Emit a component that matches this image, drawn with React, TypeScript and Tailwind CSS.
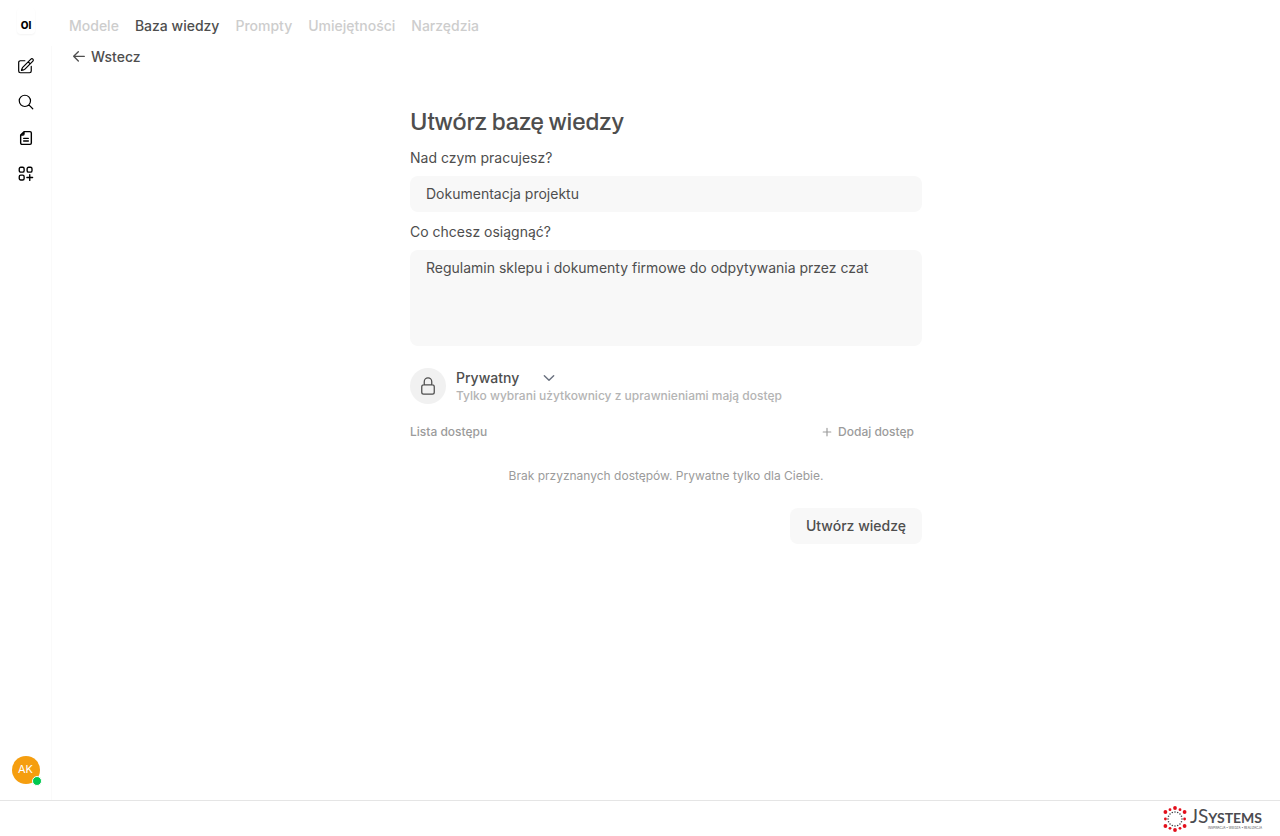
import type { ReactNode } from "react";

type IconProps = {
  className?: string;
  strokeWidth?: number;
  children: ReactNode;
};

function Icon({ className, strokeWidth = 1.5, children }: IconProps) {
  return (
    <svg
      aria-hidden="true"
      viewBox="0 0 24 24"
      fill="none"
      stroke="currentColor"
      strokeWidth={strokeWidth}
      strokeLinecap="round"
      strokeLinejoin="round"
      className={className}
    >
      {children}
    </svg>
  );
}

const sidebarItems = [
  {
    label: "Nowy czat",
    size: "size-[18px]",
    strokeWidth: 1.6,
    icon: (
      <path d="M16.862 4.487l1.687-1.688a1.875 1.875 0 112.652 2.652L10.582 16.07a4.5 4.5 0 01-1.897 1.13L6 18l.8-2.685a4.5 4.5 0 011.13-1.897l8.932-8.931zM15 6.500l2.500 2.500M19 12.500v6.250A2.250 2.250 0 0116.750 21H4.500A2.250 2.250 0 012.250 18.750V7.250A2.250 2.250 0 014.500 5H10.500" />
    ),
  },
  {
    label: "Szukaj",
    size: "size-[18px]",
    strokeWidth: 1.6,
    icon: <path d="M21 21l-5.197-5.197m0 0A7.5 7.5 0 105.196 5.196a7.5 7.5 0 0010.607 10.607z" />,
  },
  {
    label: "Notatki",
    size: "size-4",
    strokeWidth: 2.1,
    icon: (
      <path d="M9 2.500h9a2 2 0 0 1 2 2v15a2 2 0 0 1-2 2H6a2 2 0 0 1-2-2V7.500L9 2.500v3.500a1.500 1.500 0 0 1-1.500 1.500H4M8.500 12.500h7M8.500 16.500h7" />
    ),
  },
  {
    label: "Obszar roboczy",
    size: "size-[18px]",
    strokeWidth: 1.8,
    icon: (
      <>
        <rect x="3" y="3" width="6.500" height="6.500" rx="2" />
        <rect x="13.500" y="3" width="6.500" height="6.500" rx="2" />
        <rect x="3" y="13.500" width="6.500" height="6.500" rx="2" />
        <path d="M17 13v7.500M13.200 16.700h7.600" />
      </>
    ),
  },
];

const tabs = ["Modele", "Baza wiedzy", "Prompty", "Umiejętności", "Narzędzia"];

// Footer logo: red dots on a hexagon outline, dark dots on a ring inside it
const outerDots = [
  [0, -11, 1.9],
  [5, -9.3, 1.4],
  [9.6, -7, 1.9],
  [9.6, 0, 1.4],
  [9.6, 7, 1.9],
  [5, 9.3, 1.4],
  [0, 11, 1.9],
  [-5, 9.3, 1.4],
  [-9.6, 7, 1.9],
  [-9.6, 0, 1.4],
  [-9.6, -7, 1.9],
  [-5, -9.3, 1.4],
];
const innerDots = Array.from({ length: 16 }, (_, i) => (i * Math.PI) / 8);

function Sidebar() {
  return (
    <aside className="flex w-13 shrink-0 flex-col items-center text-black">
      <a
        href="#"
        className="mt-2 flex h-[26px] w-[18px] items-center justify-center rounded-sm pt-2 text-[10px] font-extrabold shadow-xs"
      >
        OI
      </a>
      <div className="mt-3 flex w-full flex-1 flex-col items-center border-r border-[#fafafa] pt-0.5">
        <nav className="flex flex-col">
          {sidebarItems.map((item) => (
            <button
              key={item.label}
              type="button"
              aria-label={item.label}
              className="flex size-9 items-center justify-center"
            >
              <Icon strokeWidth={item.strokeWidth} className={item.size}>
                {item.icon}
              </Icon>
            </button>
          ))}
        </nav>
        <button type="button" className="relative mt-auto mb-4 size-7 rounded-full bg-[#f59e0f] text-[11px] text-white">
          AK
          <span className="absolute -right-0.5 -bottom-0.5 size-2.5 rounded-full border border-white bg-[#00c950]" />
        </button>
      </div>
    </aside>
  );
}

function Logo() {
  return (
    <a href="#" aria-label="JSystems" className="flex items-center gap-0.5">
      <svg aria-hidden="true" viewBox="0 0 26 26" className="size-[26px]">
        {outerDots.map(([x, y, r]) => (
          <circle key={`${x},${y}`} cx={13 + x} cy={13 + y} r={r} fill="#e30f1b" />
        ))}
        {innerDots.map((a) => (
          <circle key={a} cx={13 + 7 * Math.sin(a)} cy={13 - 7 * Math.cos(a)} r="0.8" fill="#45454a" />
        ))}
      </svg>
      <span className="flex flex-col items-end text-[#4b4b50]">
        <span className="text-[19px] leading-4 font-[Lato,sans-serif]">
          JS<span className="text-[14px] font-bold">YSTEMS</span>
        </span>
        <span className="text-[3px] leading-1">INSPIRACJA • WIEDZA • REALIZACJA</span>
      </span>
    </a>
  );
}

function KnowledgeForm() {
  return (
    <form className="mx-auto mt-[39px] w-full max-w-lg" onSubmit={(e) => e.preventDefault()}>
      <h1 className="text-2xl font-medium font-[Archivo,'Liberation_Sans',sans-serif]">Utwórz bazę wiedzy</h1>

      <label htmlFor="name" className="mt-2.5 mb-2 block">
        Nad czym pracujesz?
      </label>
      <input
        id="name"
        type="text"
        defaultValue="Dokumentacja projektu"
        className="block w-full rounded-lg bg-[#f8f8f8] px-4 py-2 outline-none"
      />

      <label htmlFor="description" className="mt-2.5 mb-2 block">
        Co chcesz osiągnąć?
      </label>
      <textarea
        id="description"
        rows={4}
        defaultValue="Regulamin sklepu i dokumenty firmowe do odpytywania przez czat"
        className="block w-full resize-none rounded-lg bg-[#f8f8f8] px-4 py-2 outline-none"
      />

      <div className="mt-[22px] flex items-center gap-2.5">
        <div className="flex size-9 items-center justify-center rounded-full bg-[#f1f1f1]">
          <Icon className="size-5">
            <path d="M16.500 10.500V6.750a4.500 4.500 0 1 0-9 0v3.750m-.750 11.250h10.500a2.250 2.250 0 0 0 2.250-2.250v-6.750a2.250 2.250 0 0 0-2.250-2.250H6.750a2.250 2.250 0 0 0-2.250 2.250v6.750a2.250 2.250 0 0 0 2.250 2.250Z" />
          </Icon>
        </div>
        <div>
          <div className="relative flex w-26 items-center">
            <select aria-label="Widoczność" className="w-full appearance-none bg-transparent font-medium outline-none">
              <option>Prywatny</option>
              <option>Publiczny</option>
            </select>
            <Icon strokeWidth={2.5} className="pointer-events-none absolute right-1 size-3.5 text-[#6b7280]">
              <path d="M4 8l8 8 8-8" />
            </Icon>
          </div>
          <p className="text-xs font-medium text-[#b4b4b4]">
            Tylko wybrani użytkownicy z uprawnieniami mają dostęp
          </p>
        </div>
      </div>

      <div className="mt-4 flex items-center justify-between pr-2 text-xs font-medium text-[#9b9b9b]">
        <span>Lista dostępu</span>
        <button type="button" className="flex items-center gap-1 py-1">
          <Icon strokeWidth={2} className="size-3.5">
            <path d="M12 5.500v13M5.500 12h13" />
          </Icon>
          Dodaj dostęp
        </button>
      </div>

      <p className="mt-6 text-center text-xs text-[#9b9b9b]">
        Brak przyznanych dostępów. Prywatne tylko dla Ciebie.
      </p>

      <div className="mt-6 flex justify-end">
        <button type="submit" className="rounded-lg bg-[#f8f8f8] px-4 py-2 font-medium">
          Utwórz wiedzę
        </button>
      </div>
    </form>
  );
}

export default function App() {
  return (
    <div className="flex min-h-screen flex-col bg-white text-sm text-[#4e4e4e] font-[Inter,sans-serif]">
      <div className="flex flex-1">
        <Sidebar />
        <main className="flex-1 pt-4 pr-[17px] pl-[17px]">
          <nav className="flex gap-4 font-medium text-[#cdcdcd]">
            {tabs.map((tab) => (
              <a
                key={tab}
                href="#"
                aria-current={tab === "Baza wiedzy" ? "page" : undefined}
                className="aria-[current=page]:text-[#4e4e4e]"
              >
                {tab}
              </a>
            ))}
          </nav>
          <button type="button" className="mt-[11px] flex items-center gap-1 pl-0.5 font-medium">
            <Icon strokeWidth={2} className="size-4">
              <path d="M20 11H4M11 18l-7-7 7-7" />
            </Icon>
            Wstecz
          </button>
          <KnowledgeForm />
        </main>
      </div>
      <footer className="flex h-9 items-center justify-end border-t border-[#e5e5e5] px-[18px]">
        <Logo />
      </footer>
    </div>
  );
}
